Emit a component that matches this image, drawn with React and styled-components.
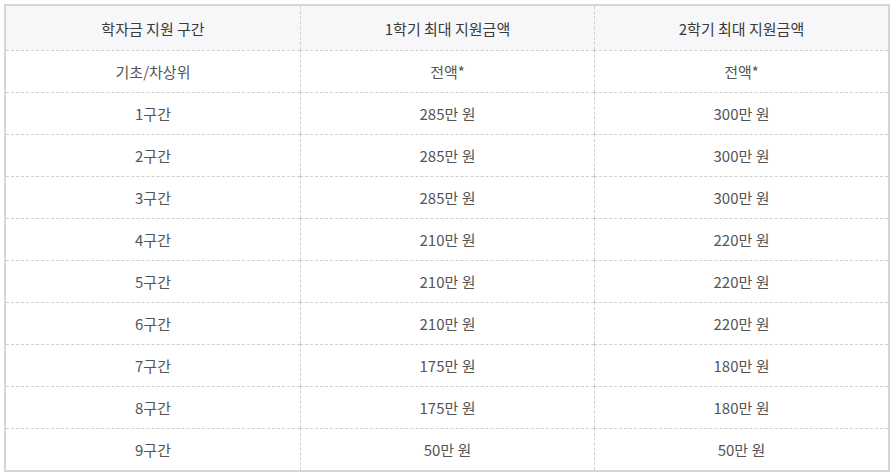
import React from "react";
import styled, { createGlobalStyle } from "styled-components";

const GlobalStyle = createGlobalStyle`
  body {
    margin: 0;
    background: #ffffff;
    font-family: "Noto Sans CJK KR", "Noto Sans", sans-serif;
  }
`;

const Wrapper = styled.div`
  padding: 4px 3px 2px 4px;
`;

const Table = styled.div`
  display: grid;
  grid-template-columns: repeat(3, 1fr);
  border: 2px solid #d6d6d8;
`;

const HeadCell = styled.div`
  height: 44px;
  display: flex;
  align-items: center;
  justify-content: center;
  background: #f7f7f9;
  color: #3a3a3a;
  font-size: 15px;
  font-weight: 400;
  border-left: ${({ first }) => (first ? "none" : "1px dashed #cfcfcf")};
`;

const Cell = styled.div`
  height: 41px;
  display: flex;
  align-items: center;
  justify-content: center;
  color: #555;
  font-size: 15px;
  border-top: 1px dashed #cfcfcf;
  border-left: ${({ first }) => (first ? "none" : "1px dashed #cfcfcf")};
`;

const headers = ["학자금 지원 구간", "1학기 최대 지원금액", "2학기 최대 지원금액"];

const rows = [
  ["기초/차상위", "전액*", "전액*"],
  ["1구간", "285만 원", "300만 원"],
  ["2구간", "285만 원", "300만 원"],
  ["3구간", "285만 원", "300만 원"],
  ["4구간", "210만 원", "220만 원"],
  ["5구간", "210만 원", "220만 원"],
  ["6구간", "210만 원", "220만 원"],
  ["7구간", "175만 원", "180만 원"],
  ["8구간", "175만 원", "180만 원"],
  ["9구간", "50만 원", "50만 원"],
];

const App = () => {
  return (
    <Wrapper>
      <GlobalStyle />
      <Table>
        {headers.map((h, i) => (
          <HeadCell key={h} first={i === 0}>
            {h}
          </HeadCell>
        ))}
        {rows.map((row, r) =>
          row.map((v, i) => (
            <Cell key={`${r}-${i}`} first={i === 0}>
              {v}
            </Cell>
          ))
        )}
      </Table>
    </Wrapper>
  );
};

export default App;
